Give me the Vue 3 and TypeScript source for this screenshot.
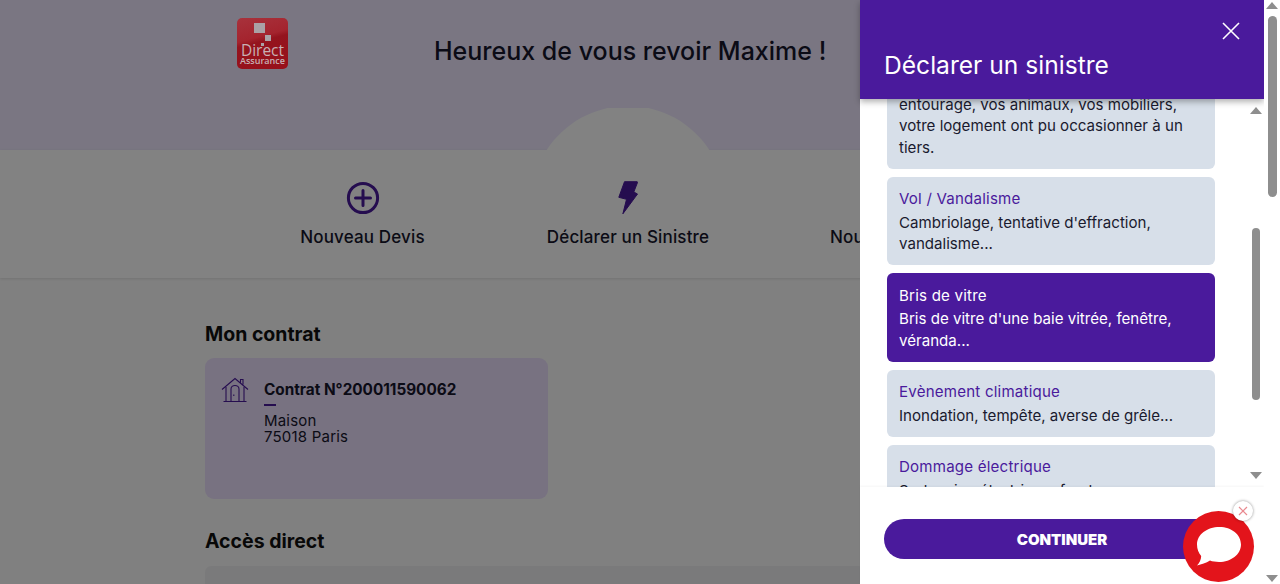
<script setup lang="ts">
interface Shortcut {
  label: string
  icon: 'plus' | 'bolt' | 'phone'
}

interface Claim {
  title: string
  text: string
  active?: boolean
}

const shortcuts: Shortcut[] = [
  { label: 'Nouveau Devis', icon: 'plus' },
  { label: 'Déclarer un Sinistre', icon: 'bolt' },
  { label: 'Nous contacter', icon: 'phone' },
]

const claims: Claim[] = [
  {
    title: 'Responsabilité civile',
    text: 'Les dommages que vous, votre\nentourage, vos animaux, vos mobiliers,\nvotre logement ont pu occasionner à un\ntiers.',
  },
  { title: 'Vol / Vandalisme', text: "Cambriolage, tentative d'effraction,\nvandalisme..." },
  { title: 'Bris de vitre', text: "Bris de vitre d'une baie vitrée, fenêtre,\nvéranda...", active: true },
  { title: 'Evènement climatique', text: 'Inondation, tempête, averse de grêle...' },
  { title: 'Dommage électrique', text: 'Surtension électrique, foudre...' },
]
</script>

<template>
  <div class="app">
    <div class="page">
      <header class="hero">
        <div class="logo">
          <span class="logo-square logo-square-big"></span>
          <span class="logo-square logo-square-small"></span>
          <span class="logo-square logo-square-dot"></span>
          <span class="logo-direct">Direct</span>
          <span class="logo-assurance">Assurance</span>
        </div>
        <h1 class="hero-title">Heureux de vous revoir Maxime !</h1>
      </header>

      <nav class="band">
        <svg class="bump" width="164" height="43" viewBox="0 0 164 43">
          <path d="M0 43A97 97 0 0 1 164 43Z" fill="#fff" />
        </svg>
        <div v-for="item in shortcuts" :key="item.label" class="shortcut">
          <svg width="36" height="36" viewBox="0 0 36 36" fill="none">
            <template v-if="item.icon === 'plus'">
              <circle cx="18" cy="18" r="14.6" stroke="#4a1a9c" stroke-width="3" />
              <path d="M18 10.5v15M10.5 18h15" stroke="#4a1a9c" stroke-width="3" stroke-linecap="round" />
            </template>
            <path
              v-else-if="item.icon === 'bolt'"
              d="M14.500 1.700H27a.6.6 0 0 1 .5.8L23.800 12l3.700 2-14.600 19.800 3.600-14.500-7.700-2z"
              fill="#4a1a9c"
              stroke="#4a1a9c"
              stroke-linejoin="round"
            />
            <circle v-else cx="18" cy="18" r="14" stroke="#4a1a9c" stroke-width="3" />
          </svg>
          <span class="shortcut-label">{{ item.label }}</span>
        </div>
      </nav>

      <main class="content">
        <h2 class="section-title">Mon contrat</h2>
        <article class="contract">
          <svg class="house" width="28" height="26" viewBox="0 0 28 26" fill="none" stroke="#4a1a9c" stroke-width="1.1">
            <path d="M1 12.500 14 1.500l13 11M19.500 5.500V2.500h2.500v5" />
            <path d="M5 10v14.500h18V10M2.500 24.500h23" />
            <path d="M10 24.500V12a4 3.500 0 0 1 8 0v12.500M12.800 17.500v1.500" />
          </svg>
          <div class="contract-body">
            <h3 class="contract-number">Contrat N°200011590062</h3>
            <span class="contract-dash"></span>
            <p class="contract-place">Maison<br />75018 Paris</p>
          </div>
        </article>
        <h2 class="section-title section-title-access">Accès direct</h2>
        <div class="access-card"></div>
      </main>

      <div class="dim"></div>

      <aside class="drawer">
        <div class="drawer-head">
          <svg class="drawer-close" width="18" height="18" viewBox="0 0 18 18">
            <path d="M1 1l16 16M17 1 1 17" stroke="#fff" stroke-width="1.6" fill="none" />
          </svg>
          <h2 class="drawer-title">Déclarer un sinistre</h2>
        </div>

        <div class="drawer-middle">
          <div class="claims">
            <div v-for="claim in claims" :key="claim.title" class="claim" :class="{ 'claim-active': claim.active }">
              <div class="claim-title">{{ claim.title }}</div>
              <div class="claim-text">{{ claim.text }}</div>
            </div>
          </div>
          <div class="scrollbar scrollbar-inner">
            <span class="arrow-up"></span>
            <div class="track track-inner"><span class="thumb"></span></div>
            <span class="arrow-down"></span>
          </div>
        </div>

        <div class="drawer-foot">
          <button class="continue" type="button">CONTINUER</button>
        </div>
      </aside>

      <div class="chat">
        <svg width="46" height="42" viewBox="0 0 46 42">
          <path
            d="M23.500 1C35.500 1 45 8.500 45 18.500S35 36 23 36c-3.500 0-6.500-.4-9-1.400C10 37 5.500 38.500 1 39.500c2.500-2.500 4-5.500 4.200-9.500C2.500 27 1 23 1 18.500 1 8.500 11 1 23.500 1Z"
            fill="#fff"
          />
        </svg>
      </div>
      <div class="chat-close">
        <svg width="10" height="10" viewBox="0 0 10 10">
          <path d="M1 1l8 8M9 1 1 9" stroke="#e98a90" stroke-width="1.2" fill="none" />
        </svg>
      </div>
    </div>

    <div class="scrollbar scrollbar-outer">
      <span class="arrow-up"></span>
      <div class="track"><span class="thumb"></span></div>
      <span class="arrow-down"></span>
    </div>
  </div>
</template>

<style>
html,
body {
  margin: 0;
  overflow: hidden;
  background: #fff;
}
</style>

<style scoped>
.app {
  display: flex;
  width: 1280px;
  height: 584px;
  overflow: hidden;
  font-family: 'Inter', 'Liberation Sans', sans-serif;
  color: #16162c;
}

.page {
  position: relative;
  flex: 1;
  min-width: 0;
  overflow: hidden;
  background: #fcfcfc;
}

/* top of the page */
.hero {
  display: flex;
  align-items: flex-start;
  gap: 146px;
  height: 150px;
  padding: 18px 0 0 237px;
  box-sizing: border-box;
  background: #efe8ff;
}

.hero-title {
  margin: 18px 0 0;
  font-size: 25px;
  line-height: 30px;
  font-weight: 500;
  white-space: nowrap;
}

/* the logo keeps its own dimmed colours, it sits over the dim layer */
.logo {
  position: relative;
  z-index: 1;
  flex: none;
  width: 51px;
  height: 51px;
  border-radius: 5px;
  overflow: hidden;
  background: linear-gradient(165deg, #a8323c 0%, #a4242e 38%, #94141e 46%, #98101a 100%);
  color: #c8b0b4;
  text-align: center;
}

.logo-square {
  position: absolute;
  background: #aaa2a6;
}

.logo-square-big {
  left: 17px;
  top: 5px;
  width: 11px;
  height: 10px;
}

.logo-square-small {
  left: 28px;
  top: 17px;
  width: 6px;
  height: 6px;
}

.logo-square-dot {
  left: 24px;
  top: 25px;
  width: 3px;
  height: 3px;
}

.logo-direct {
  position: absolute;
  left: 0;
  right: 0;
  top: 24px;
  font-family: 'Open Sans', sans-serif;
  font-size: 15.5px;
  line-height: 17px;
}

.logo-assurance {
  position: absolute;
  left: 0;
  right: 0;
  top: 38px;
  font-family: 'Open Sans', sans-serif;
  font-size: 9px;
  line-height: 10px;
  font-weight: 600;
}

/* shortcuts */
.band {
  position: relative;
  display: flex;
  justify-content: center;
  height: 128px;
  padding-right: 8px;
  background: #fff;
  box-shadow: 0 1px 3px rgba(0, 0, 0, 0.12);
}

.bump {
  position: absolute;
  left: 546px;
  top: -42px;
}

.shortcut {
  display: flex;
  flex-direction: column;
  align-items: center;
  width: 265.5px;
  padding-top: 30px;
  box-sizing: border-box;
}

.shortcut-label {
  margin-top: 11px;
  font-size: 17px;
  line-height: 20px;
  font-weight: 500;
  letter-spacing: 0.15px;
  white-space: nowrap;
}

/* contract part */
.content {
  padding: 44px 0 0 205px;
}

.section-title {
  margin: 0;
  font-size: 19.5px;
  line-height: 24px;
  font-weight: 700;
  color: #111;
}

.section-title-access {
  margin-top: 30px;
}

.contract {
  display: flex;
  gap: 15px;
  width: 343px;
  height: 141px;
  margin-top: 12px;
  padding: 19px 16px;
  box-sizing: border-box;
  border-radius: 9px;
  background: #ecdffd;
}

.house {
  flex: none;
}

.contract-number {
  margin: 3px 0 0;
  font-size: 15.3px;
  line-height: 20px;
  font-weight: 700;
}

.contract-dash {
  display: block;
  width: 12px;
  height: 2px;
  margin-top: 4px;
  background: #4a1a9c;
}

.contract-place {
  margin: 7px 0 0;
  font-size: 15px;
  line-height: 16px;
  letter-spacing: 0.2px;
}

.access-card {
  width: 660px;
  height: 60px;
  margin-top: 13px;
  border-radius: 6px 6px 0 0;
  background: #f0f0f2;
}

.dim {
  position: absolute;
  inset: 0;
  background: rgba(0, 0, 0, 0.49);
}

/* drawer */
.drawer {
  position: absolute;
  z-index: 2;
  top: 0;
  right: 0;
  bottom: 0;
  display: flex;
  flex-direction: column;
  width: 404px;
  background: #fff;
}

.drawer-head {
  position: relative;
  z-index: 2;
  flex: none;
  height: 99px;
  padding: 50px 0 0 24px;
  box-sizing: border-box;
  background: #4a1a9c;
  box-shadow: 0 3px 6px rgba(0, 0, 0, 0.3);
}

.drawer-close {
  position: absolute;
  right: 24px;
  top: 22px;
}

.drawer-title {
  margin: 0;
  color: #fff;
  font-size: 24.6px;
  line-height: 30px;
  font-weight: 400;
}

.drawer-middle {
  display: flex;
  flex: 1;
  min-height: 0;
  overflow: hidden;
}

.claims {
  flex: 1;
  display: flex;
  flex-direction: column;
  gap: 8px;
  margin-top: -62px;
  padding: 0 33px 0 27px;
}

.claim {
  padding: 11.5px 12px 10.5px;
  border-radius: 6px;
  background: #d7dfe9;
  font-size: 15.1px;
  line-height: 21.5px;
  color: #1a1a2e;
}

.claim-text {
  white-space: pre-line;
}

.claim-title {
  margin-bottom: 2px;
  color: #4a1a9c;
  letter-spacing: 0.2px;
}

.claim-active {
  background: #4a1a9c;
  color: #fff;
}

.claim-active .claim-title {
  color: #fff;
}

.drawer-foot {
  position: relative;
  flex: none;
  height: 97px;
  padding: 32px 24px 0;
  box-sizing: border-box;
  background: #fff;
  box-shadow: 0 -1px 2px rgba(0, 0, 0, 0.04);
}

.continue {
  display: block;
  width: 100%;
  height: 40px;
  border: 0;
  border-radius: 20px;
  background: #4a1a9c;
  color: #fff;
  font-family: 'Inter', sans-serif;
  font-size: 15px;
  font-weight: 900;
}

/* scrollbars */
.scrollbar {
  display: flex;
  flex: none;
  flex-direction: column;
  align-items: center;
  width: 16px;
  background: #fff;
}

.scrollbar-outer {
  height: 584px;
  padding: 2px 0;
  box-sizing: border-box;
}

.scrollbar-inner {
  padding: 8px 0;
  box-sizing: border-box;
}

.track {
  flex: 1;
  width: 9px;
  margin: 7px 0 5px;
}

.track-inner {
  width: 8px;
  margin: 5px 0;
  padding-top: 109px;
  box-sizing: border-box;
}

.thumb {
  display: block;
  height: 181px;
  border-radius: 5px;
  background: #8e8e8e;
}

.track-inner .thumb {
  height: 172px;
}

.arrow-up,
.arrow-down {
  flex: none;
  width: 0;
  height: 0;
  border-left: 6px solid transparent;
  border-right: 6px solid transparent;
}

.arrow-up {
  border-bottom: 7px solid #8e8e8e;
}

.arrow-down {
  border-top: 7px solid #8e8e8e;
}

/* chat button */
.chat {
  position: absolute;
  z-index: 3;
  left: 1183px;
  top: 511px;
  display: flex;
  align-items: center;
  justify-content: center;
  width: 71px;
  height: 71px;
  border-radius: 50%;
  background: #e3141b;
}

.chat-close {
  position: absolute;
  z-index: 3;
  left: 1233px;
  top: 501px;
  display: flex;
  align-items: center;
  justify-content: center;
  width: 20px;
  height: 20px;
  border-radius: 50%;
  background: #fff;
  box-shadow: 0 0 3px rgba(0, 0, 0, 0.45);
}
</style>
